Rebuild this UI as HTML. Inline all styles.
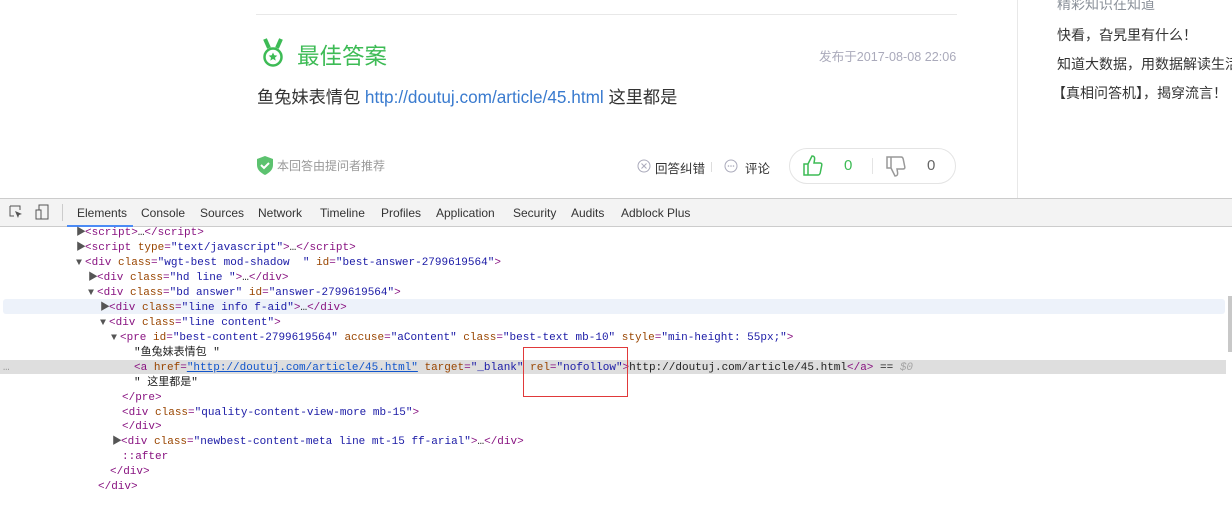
<!DOCTYPE html>
<html><head><meta charset="utf-8">
<style>
*{margin:0;padding:0;box-sizing:border-box}
body{width:1232px;height:485px;overflow:hidden;background:#fff;font-family:"Liberation Sans","Noto Sans CJK SC",sans-serif;position:relative}
.abs{position:absolute}
.top{left:0;top:0;width:1232px;height:198px;background:#fff}
.cn{font-family:"Liberation Sans","Noto Sans CJK SC",sans-serif;white-space:nowrap}
.dt{left:0;top:198px;width:1232px;height:287px;background:#fff;border-top:1px solid #ccc}
.tb{left:0;top:199px;width:1232px;height:28px;background:#f3f3f3;border-bottom:1px solid #ccc;font-size:12px;color:#333}
.tab{position:absolute;top:7px}
.code{font-family:"Liberation Mono","Noto Sans CJK SC",monospace;font-size:11px;white-space:pre;line-height:15px;color:#222}
.r{position:absolute;left:0;width:1226px;height:15px}
.t{color:#881280}.a{color:#994500}.v{color:#1a1aa6}.g{color:#a5a5a5}
.tri{color:#555;font-size:10px;display:inline-block;width:9px}
</style></head><body>
<div class="abs top">
  <div class="abs" style="left:256px;top:14px;width:701px;height:1px;background:#e8e8e8"></div>
  <div class="abs" style="left:1017px;top:0;width:1px;height:198px;background:#e8e8e8"></div>
  <svg class="abs" style="left:260px;top:38px" width="26" height="30" viewBox="0 0 26 30">
    <path d="M5 1 L9 10 M21 1 L17 10" stroke="#3dbb55" stroke-width="4" fill="none"/>
    <circle cx="13" cy="19" r="8.5" stroke="#3dbb55" stroke-width="2.5" fill="none"/>
    <path d="M13 14.5l1.3 2.8 3 .3-2.3 2 .7 3-2.7-1.6-2.7 1.6.7-3-2.3-2 3-.3z" fill="#3dbb55"/>
  </svg>
  <div class="abs cn" style="left:297px;top:39px;font-size:22.5px;color:#3dbb55">最佳答案</div>
  <div class="abs cn" style="left:819px;top:46px;font-size:12.6px;color:#aab">发布于2017-08-08 22:06</div>
  <div class="abs cn" style="left:257px;top:83px;font-size:17.2px;color:#333">鱼兔妹表情包 <span style="color:#3a7bcf">http://doutuj.com/article/45.html</span> 这里都是</div>
  <svg class="abs" style="left:257px;top:156px" width="16" height="19" viewBox="0 0 16 19"><path d="M8 0L16 3V9C16 14 12 17 8 19 4 17 0 14 0 9V3Z" fill="#5cc26f"/><path d="M4 9l3 3 5-5" stroke="#fff" stroke-width="2" fill="none"/></svg>
  <div class="abs cn" style="left:277px;top:157px;font-size:12px;color:#999">本回答由提问者推荐</div>
  <svg class="abs" style="left:637px;top:159px" width="14" height="14"><circle cx="7" cy="7" r="6" stroke="#aab" fill="none"/><path d="M4.5 4.5l5 5M9.5 4.5l-5 5" stroke="#aab"/></svg>
  <div class="abs cn" style="left:655px;top:158px;font-size:12.5px;color:#333">回答纠错</div>
  <div class="abs" style="left:711px;top:162px;width:1px;height:10px;background:#ddd"></div>
  <svg class="abs" style="left:724px;top:159px" width="15" height="15"><circle cx="7" cy="7" r="6" stroke="#aab" fill="none"/><circle cx="4.5" cy="7" r=".8" fill="#aab"/><circle cx="7" cy="7" r=".8" fill="#aab"/><circle cx="9.5" cy="7" r=".8" fill="#aab"/></svg>
  <div class="abs cn" style="left:745px;top:158px;font-size:12.5px;color:#333">评论</div>
  <div class="abs" style="left:789px;top:148px;width:167px;height:36px;border:1px solid #e4e4e4;border-radius:18px"></div>
  <svg class="abs" style="left:803px;top:155px" width="20" height="22" viewBox="0 0 20 22"><path d="M1 9h4v11H1zM5 9l4-8c2 0 3 1 2.5 4L11 8h6c1.5 0 2 1 1.8 2l-1.6 8c-.3 1.2-1 2-2 2H5" stroke="#3dbb55" stroke-width="1.5" fill="none"/></svg>
  <div class="abs" style="left:844px;top:157px;font-size:15px;color:#3dbb55">0</div>
  <div class="abs" style="left:872px;top:158px;width:1px;height:16px;background:#e4e4e4"></div>
  <svg class="abs" style="left:886px;top:155px" width="20" height="22" viewBox="0 0 20 22"><path d="M1 2h4v11H1zM5 13l4 8c2 0 3-1 2.5-4L11 14h6c1.5 0 2-1 1.8-2l-1.6-8c-.3-1.2-1-2-2-2H5" stroke="#999" stroke-width="1.5" fill="none"/></svg>
  <div class="abs" style="left:927px;top:157px;font-size:15px;color:#666">0</div>
  <div class="abs cn" style="left:1057px;top:-6px;font-size:14px;color:#8a9099">精彩知识在知道</div>
  <div class="abs cn" style="left:1057px;top:25px;font-size:14px;color:#333">快看，旮旯里有什么！</div>
  <div class="abs cn" style="left:1057px;top:54px;font-size:14px;color:#333">知道大数据，用数据解读生活</div>
  <div class="abs cn" style="left:1052px;top:83px;font-size:14px;color:#333">【真相问答机】，揭穿流言！</div>
</div>
<div class="abs dt"></div>
<div class="abs tb">
  <svg class="abs" style="left:9px;top:6px" width="14" height="14"><path d="M1 1h10v4M1 1v10h4" stroke="#555" fill="none"/><path d="M6 6l7 3-3 1-1 3z" fill="#555"/></svg>
  <svg class="abs" style="left:35px;top:5px" width="16" height="16"><rect x="4" y="1" width="9" height="14" stroke="#555" fill="none"/><rect x="1" y="6" width="5" height="9" stroke="#555" fill="#f3f3f3"/></svg>
  <div class="abs" style="left:62px;top:5px;width:1px;height:17px;background:#ccc"></div>
  <span class="tab" style="left:77px">Elements</span>
  <div class="abs" style="left:67px;top:26px;width:66px;height:2px;background:#4b8bf5"></div>
  <span class="tab" style="left:141px">Console</span>
  <span class="tab" style="left:200px">Sources</span>
  <span class="tab" style="left:258px">Network</span>
  <span class="tab" style="left:320px">Timeline</span>
  <span class="tab" style="left:381px">Profiles</span>
  <span class="tab" style="left:436px">Application</span>
  <span class="tab" style="left:513px">Security</span>
  <span class="tab" style="left:571px">Audits</span>
  <span class="tab" style="left:621px">Adblock Plus</span>
</div>
<div class="abs" style="left:3px;top:299px;width:1222px;height:15px;background:#edf2fa;border-radius:3px"></div>
<div class="abs" style="left:0;top:360px;width:1226px;height:14px;background:#dedede"></div>
<div class="abs" style="left:1228px;top:296px;width:4px;height:56px;background:#c8c8c8"></div>
<div class="abs code" style="left:0;top:227px;width:1226px">
<div class="r" style="top:-1px"><span style="position:absolute;left:76px"><span class="tri">▶</span><span class="t">&lt;script&gt;</span>…<span class="t">&lt;/script&gt;</span></span></div>
<div class="r" style="top:14px"><span style="position:absolute;left:76px"><span class="tri">▶</span><span class="t">&lt;script </span><span class="a">type</span><span class="t">=</span><span class="v">"text/javascript"</span><span class="t">&gt;</span>…<span class="t">&lt;/script&gt;</span></span></div>
<div class="r" style="top:29px"><span style="position:absolute;left:76px"><span class="tri">▼</span><span class="t">&lt;div </span><span class="a">class</span><span class="t">=</span><span class="v">"wgt-best mod-shadow  "</span><span class="a"> id</span><span class="t">=</span><span class="v">"best-answer-2799619564"</span><span class="t">&gt;</span></span></div>
<div class="r" style="top:44px"><span style="position:absolute;left:88px"><span class="tri">▶</span><span class="t">&lt;div </span><span class="a">class</span><span class="t">=</span><span class="v">"hd line "</span><span class="t">&gt;</span>…<span class="t">&lt;/div&gt;</span></span></div>
<div class="r" style="top:59px"><span style="position:absolute;left:88px"><span class="tri">▼</span><span class="t">&lt;div </span><span class="a">class</span><span class="t">=</span><span class="v">"bd answer"</span><span class="a"> id</span><span class="t">=</span><span class="v">"answer-2799619564"</span><span class="t">&gt;</span></span></div>
<div class="r" style="top:74px"><span style="position:absolute;left:100px"><span class="tri">▶</span><span class="t">&lt;div </span><span class="a">class</span><span class="t">=</span><span class="v">"line info f-aid"</span><span class="t">&gt;</span>…<span class="t">&lt;/div&gt;</span></span></div>
<div class="r" style="top:89px"><span style="position:absolute;left:100px"><span class="tri">▼</span><span class="t">&lt;div </span><span class="a">class</span><span class="t">=</span><span class="v">"line content"</span><span class="t">&gt;</span></span></div>
<div class="r" style="top:104px"><span style="position:absolute;left:111px"><span class="tri">▼</span><span class="t">&lt;pre </span><span class="a">id</span><span class="t">=</span><span class="v">"best-content-2799619564"</span><span class="a"> accuse</span><span class="t">=</span><span class="v">"aContent"</span><span class="a"> class</span><span class="t">=</span><span class="v">"best-text mb-10"</span><span class="a"> style</span><span class="t">=</span><span class="v">"min-height: 55px;"</span><span class="t">&gt;</span></span></div>
<div class="r" style="top:119px"><span style="position:absolute;left:134px">"鱼兔妹表情包 "</span></div>
<div class="r" style="top:134px"><span style="position:absolute;left:3px;color:#999">…</span><span style="position:absolute;left:134px"><span class="t">&lt;a </span><span class="a">href</span><span class="t">=</span><span class="v" style="color:#1155cc;text-decoration:underline">"http://doutuj.com/article/45.html"</span><span class="a"> target</span><span class="t">=</span><span class="v">"_blank"</span><span class="a"> rel</span><span class="t">=</span><span class="v">"nofollow"</span><span class="t">&gt;</span>http://doutuj.com/article/45.html<span class="t">&lt;/a&gt;</span> == <span class="g" style="font-style:italic">$0</span></span></div>
<div class="r" style="top:149px"><span style="position:absolute;left:134px">" 这里都是"</span></div>
<div class="r" style="top:164px"><span style="position:absolute;left:122px"><span class="t">&lt;/pre&gt;</span></span></div>
<div class="r" style="top:179px"><span style="position:absolute;left:122px"><span class="t">&lt;div </span><span class="a">class</span><span class="t">=</span><span class="v">"quality-content-view-more mb-15"</span><span class="t">&gt;</span></span></div>
<div class="r" style="top:193px"><span style="position:absolute;left:122px"><span class="t">&lt;/div&gt;</span></span></div>
<div class="r" style="top:208px"><span style="position:absolute;left:112px"><span class="tri">▶</span><span class="t">&lt;div </span><span class="a">class</span><span class="t">=</span><span class="v">"newbest-content-meta line mt-15 ff-arial"</span><span class="t">&gt;</span>…<span class="t">&lt;/div&gt;</span></span></div>
<div class="r" style="top:223px"><span style="position:absolute;left:122px;color:#881280">::after</span></div>
<div class="r" style="top:238px"><span style="position:absolute;left:110px"><span class="t">&lt;/div&gt;</span></span></div>
<div class="r" style="top:253px"><span style="position:absolute;left:98px"><span class="t">&lt;/div&gt;</span></span></div>
</div>
<div class="abs" style="left:523px;top:347px;width:105px;height:50px;border:1px solid #e0393a"></div>
</body></html>
